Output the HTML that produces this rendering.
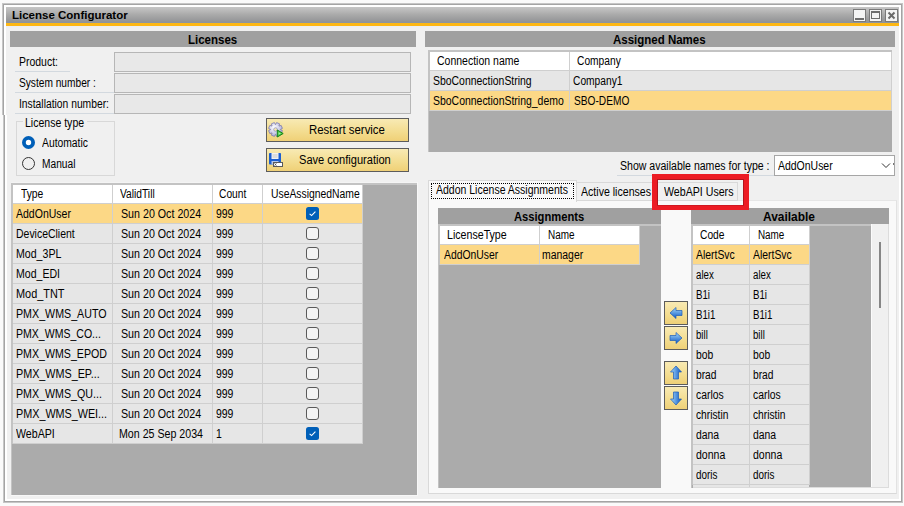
<!DOCTYPE html>
<html><head><meta charset="utf-8"><style>
html,body{margin:0;padding:0;}
body{width:904px;height:506px;overflow:hidden;position:relative;background:#fafafa;}
.a{position:absolute;}
.t,.tb{position:absolute;white-space:nowrap;font-family:"Liberation Sans",sans-serif;line-height:14px;transform-origin:0 0;}
.t{font-size:12px;}
.tb{font-size:11.5px;font-weight:bold;}
.tb12{position:absolute;white-space:nowrap;font-family:"Liberation Sans",sans-serif;line-height:14px;transform-origin:0 0;font-size:12px;font-weight:bold;}
</style></head><body>
<div class="a" style="left:2px;top:3px;width:901px;height:500px;background:#ffffff;border:1px solid #c6c6c6;box-sizing:border-box;"></div>
<div class="a" style="left:3px;top:4px;width:899px;height:498px;border:1px solid #a4a4a4;box-sizing:border-box;"></div>
<div class="a" style="left:2px;top:115px;width:5px;height:388px;background:#fafafa;"></div>
<div class="a" style="left:3px;top:115px;width:1px;height:388px;background:#c6c6c6;"></div>
<div class="a" style="left:4px;top:115px;width:1px;height:387px;background:#a4a4a4;"></div>
<div class="a" style="left:5px;top:115px;width:2px;height:386px;background:#ffffff;"></div>
<div class="a" style="left:4px;top:501px;width:3px;height:1px;background:#a4a4a4;"></div>
<div class="a" style="left:3px;top:502px;width:4px;height:1px;background:#c6c6c6;"></div>
<div class="a" style="left:6px;top:26px;width:893px;height:473px;background:#f0f0f0;"></div>
<div class="a" style="left:6px;top:115px;width:1px;height:384px;background:#ffffff;"></div>
<div class="a" style="left:6px;top:26px;width:893px;height:1px;background:#eceef4;"></div>
<div class="a" style="left:6px;top:7px;width:893px;height:16px;background:linear-gradient(#c6c6c6,#a9a9a9 50%,#8e9093);"></div>
<div class="a" style="left:6px;top:22px;width:893px;height:1px;background:#8c94a0;"></div>
<div class="a" style="left:6px;top:23px;width:893px;height:3px;background:#fdb714;"></div>
<div class="tb" style="left:12.00px;top:8px;color:#000;">License Configurator</div>
<div class="a" style="left:853px;top:9px;width:13px;height:13px;background:#f4f4f4;border:1px solid #7a7a7a;box-sizing:border-box;"></div>
<div class="a" style="left:869px;top:9px;width:13px;height:13px;background:#f4f4f4;border:1px solid #7a7a7a;box-sizing:border-box;"></div>
<div class="a" style="left:885px;top:9px;width:13px;height:13px;background:#f4f4f4;border:1px solid #7a7a7a;box-sizing:border-box;"></div>
<div class="a" style="left:855px;top:18px;width:9px;height:2px;background:#6e6e6e;"></div>
<div class="a" style="left:871px;top:11px;width:9px;height:8px;border:1px solid #6e6e6e;box-sizing:border-box;border-top-width:2px;"></div>
<svg class="a" style="left:885px;top:9px" width="13" height="13"><path d="M3.5 3.5L9.5 9.5M9.5 3.5L3.5 9.5" stroke="#6a6a6a" stroke-width="2"/></svg>
<div class="a" style="left:10px;top:31px;width:406px;height:16px;background:#a0a0a0;"></div>
<div class="tb12" style="left:187.70px;top:33px;color:#000;transform:scaleX(0.957);">Licenses</div>
<div class="t" style="left:18.60px;top:55px;color:#000;transform:scaleX(0.872);">Product:</div>
<div class="a" style="left:15px;top:71px;width:55px;height:1px;background:#d3d9df;"></div>
<div class="a" style="left:114px;top:52px;width:297px;height:20px;background:#e8e8e8;border:1px solid #b6b6b6;box-sizing:border-box;"></div>
<div class="t" style="left:18.60px;top:76px;color:#000;transform:scaleX(0.847);">System number :</div>
<div class="a" style="left:15px;top:92px;width:99px;height:1px;background:#d3d9df;"></div>
<div class="a" style="left:114px;top:73px;width:297px;height:20px;background:#e8e8e8;border:1px solid #b6b6b6;box-sizing:border-box;"></div>
<div class="t" style="left:18.60px;top:97px;color:#000;transform:scaleX(0.859);">Installation number:</div>
<div class="a" style="left:15px;top:113px;width:99px;height:1px;background:#d3d9df;"></div>
<div class="a" style="left:114px;top:94px;width:297px;height:20px;background:#e8e8e8;border:1px solid #b6b6b6;box-sizing:border-box;"></div>
<div class="a" style="left:16px;top:121px;width:99px;height:55px;border:1px solid #d8d8d8;box-sizing:border-box;"></div>
<div class="a" style="left:23px;top:116px;width:64px;height:8px;background:#f0f0f0;"></div>
<div class="t" style="left:25.20px;top:116px;color:#000;transform:scaleX(0.877);">License type</div>
<svg class="a" style="left:22px;top:136px" width="14" height="14"><circle cx="6.5" cy="6.5" r="4.6" fill="#fff" stroke="#005fb8" stroke-width="3.8"/></svg>
<div class="t" style="left:41.50px;top:136px;color:#000;transform:scaleX(0.861);">Automatic</div>
<svg class="a" style="left:22px;top:157px" width="14" height="14"><circle cx="6.5" cy="6.5" r="6" fill="#f0f0f0" stroke="#333" stroke-width="1"/></svg>
<div class="t" style="left:41.50px;top:157px;color:#000;transform:scaleX(0.850);">Manual</div>
<div class="a" style="left:266px;top:118px;width:143px;height:24px;background:linear-gradient(#f8eab4,#f3dc8e 60%,#efd077);border:1px solid #5c5c5c;box-sizing:border-box;"></div>
<div class="a" style="left:266px;top:148px;width:143px;height:24px;background:linear-gradient(#f8eab4,#f3dc8e 60%,#efd077);border:1px solid #5c5c5c;box-sizing:border-box;"></div>
<div class="t" style="left:308.50px;top:123px;color:#000;transform:scaleX(0.948);">Restart service</div>
<div class="t" style="left:299.30px;top:153px;color:#000;transform:scaleX(0.923);">Save configuration</div>
<svg class="a" style="left:268px;top:122px" width="17" height="17" viewBox="0 0 17 17">
<defs><radialGradient id="gg" cx="0.4" cy="0.35" r="0.7"><stop offset="0" stop-color="#ffffff"/><stop offset="1" stop-color="#a9a9d6"/></radialGradient></defs>
<path d="M12.40,7.58 L14.41,8.60 L13.16,11.61 L11.02,10.91 L10.91,11.02 L11.61,13.16 L8.60,14.41 L7.58,12.40 L7.42,12.40 L6.40,14.41 L3.39,13.16 L4.09,11.02 L3.98,10.91 L1.84,11.61 L0.59,8.60 L2.60,7.58 L2.60,7.42 L0.59,6.40 L1.84,3.39 L3.98,4.09 L4.09,3.98 L3.39,1.84 L6.40,0.59 L7.42,2.60 L7.58,2.60 L8.60,0.59 L11.61,1.84 L10.91,3.98 L11.02,4.09 L13.16,3.39 L14.41,6.40 L12.40,7.42 Z" fill="url(#gg)" stroke="#6e6eaa" stroke-width="0.7"/>
<circle cx="7.5" cy="7.5" r="1.8" fill="#f4e8b0" stroke="#8080b8" stroke-width="0.6"/>
<path d="M9.3,8 L15.2,11.5 L9.3,15 Z" fill="#46c846" stroke="#178217" stroke-width="1"/><path d="M10.6,10.3 L13,11.5 L10.6,12.8 Z" fill="#a8eca8"/></svg>
<svg class="a" style="left:268px;top:152px" width="16" height="16" viewBox="0 0 16 16">
<rect x="1" y="1" width="12" height="11.5" rx="0.8" fill="#1c5fd0"/>
<rect x="3.5" y="1" width="7" height="6" fill="#f2f2f2"/>
<rect x="4.5" y="2.5" width="5" height="1" fill="#c8c8c8"/><rect x="4.5" y="4.5" width="5" height="1" fill="#c8c8c8"/>
<rect x="3.5" y="9" width="7" height="3.5" fill="#b8c8e8"/>
<rect x="5" y="10" width="10" height="5" fill="#5a5a5a"/>
<rect x="6" y="11" width="8" height="3" fill="#ffffff"/>
<path d="M6.5,11.3 L8.5,13.7 M8.5,11.3 L6.5,13.7" stroke="#444" stroke-width="0.7"/></svg>
<div class="a" style="left:11px;top:183px;width:406px;height:312px;background:#ababab;"></div>
<div class="a" style="left:11px;top:183px;width:406px;height:2px;background:#c3c3c3;"></div>
<div class="a" style="left:11px;top:183px;width:1px;height:312px;background:#c3c3c3;"></div>
<div class="a" style="left:12px;top:183px;width:1px;height:261px;background:#c3c3c3;"></div>
<div class="a" style="left:13px;top:185px;width:349px;height:18px;background:#ffffff;"></div>
<div class="a" style="left:13px;top:203px;width:349px;height:1px;background:#cfcfcf;"></div>
<div class="a" style="left:13px;top:204px;width:349px;height:19px;background:#fcd886;"></div>
<div class="a" style="left:13px;top:223px;width:349px;height:1px;background:#cfcfcf;"></div>
<div class="a" style="left:13px;top:224px;width:349px;height:19px;background:#e6e6e6;"></div>
<div class="a" style="left:13px;top:243px;width:349px;height:1px;background:#cfcfcf;"></div>
<div class="a" style="left:13px;top:244px;width:349px;height:19px;background:#e6e6e6;"></div>
<div class="a" style="left:13px;top:263px;width:349px;height:1px;background:#cfcfcf;"></div>
<div class="a" style="left:13px;top:264px;width:349px;height:19px;background:#e6e6e6;"></div>
<div class="a" style="left:13px;top:283px;width:349px;height:1px;background:#cfcfcf;"></div>
<div class="a" style="left:13px;top:284px;width:349px;height:19px;background:#e6e6e6;"></div>
<div class="a" style="left:13px;top:303px;width:349px;height:1px;background:#cfcfcf;"></div>
<div class="a" style="left:13px;top:304px;width:349px;height:19px;background:#e6e6e6;"></div>
<div class="a" style="left:13px;top:323px;width:349px;height:1px;background:#cfcfcf;"></div>
<div class="a" style="left:13px;top:324px;width:349px;height:19px;background:#e6e6e6;"></div>
<div class="a" style="left:13px;top:343px;width:349px;height:1px;background:#cfcfcf;"></div>
<div class="a" style="left:13px;top:344px;width:349px;height:19px;background:#e6e6e6;"></div>
<div class="a" style="left:13px;top:363px;width:349px;height:1px;background:#cfcfcf;"></div>
<div class="a" style="left:13px;top:364px;width:349px;height:19px;background:#e6e6e6;"></div>
<div class="a" style="left:13px;top:383px;width:349px;height:1px;background:#cfcfcf;"></div>
<div class="a" style="left:13px;top:384px;width:349px;height:19px;background:#e6e6e6;"></div>
<div class="a" style="left:13px;top:403px;width:349px;height:1px;background:#cfcfcf;"></div>
<div class="a" style="left:13px;top:404px;width:349px;height:19px;background:#e6e6e6;"></div>
<div class="a" style="left:13px;top:423px;width:349px;height:1px;background:#cfcfcf;"></div>
<div class="a" style="left:13px;top:424px;width:349px;height:19px;background:#e6e6e6;"></div>
<div class="a" style="left:13px;top:443px;width:349px;height:1px;background:#cfcfcf;"></div>
<div class="a" style="left:112px;top:185px;width:1px;height:259px;background:#cfcfcf;"></div>
<div class="a" style="left:212px;top:185px;width:1px;height:259px;background:#cfcfcf;"></div>
<div class="a" style="left:262px;top:185px;width:1px;height:259px;background:#cfcfcf;"></div>
<div class="a" style="left:362px;top:185px;width:1px;height:259px;background:#cfcfcf;"></div>
<div class="a" style="left:417px;top:182px;width:1px;height:314px;background:#f7f7f7;"></div>
<div class="a" style="left:11px;top:495px;width:407px;height:1px;background:#f7f7f7;"></div>
<div class="a" style="left:11px;top:182px;width:406px;height:1px;background:#f4f4f4;"></div>
<div class="t" style="left:20.90px;top:187px;color:#000;transform:scaleX(0.858);">Type</div>
<div class="t" style="left:120.30px;top:187px;color:#000;transform:scaleX(0.853);">ValidTill</div>
<div class="t" style="left:219.40px;top:187px;color:#000;transform:scaleX(0.853);">Count</div>
<div class="t" style="left:270.50px;top:187px;color:#000;transform:scaleX(0.864);">UseAssignedName</div>
<div class="t" style="left:16.20px;top:207px;color:#000;transform:scaleX(0.876);">AddOnUser</div>
<div class="t" style="left:121.40px;top:207px;color:#000;transform:scaleX(0.890);">Sun 20 Oct 2024</div>
<div class="t" style="left:216.30px;top:207px;color:#000;transform:scaleX(0.870);">999</div>
<svg class="a" style="left:306px;top:207px" width="13" height="13"><rect x="0" y="0" width="13" height="13" rx="2.5" fill="#005fb8"/><path d="M3.6 6.8L5.6 8.6L9.4 4.6" stroke="#fff" stroke-width="1.1" fill="none"/></svg>
<div class="t" style="left:16.20px;top:227px;color:#000;transform:scaleX(0.872);">DeviceClient</div>
<div class="t" style="left:121.40px;top:227px;color:#000;transform:scaleX(0.890);">Sun 20 Oct 2024</div>
<div class="t" style="left:216.30px;top:227px;color:#000;transform:scaleX(0.870);">999</div>
<svg class="a" style="left:306px;top:227px" width="13" height="13"><rect x="0.5" y="0.5" width="12" height="12" rx="2.5" fill="#f4f4f4" stroke="#5a5a5a" stroke-width="1"/></svg>
<div class="t" style="left:16.20px;top:247px;color:#000;transform:scaleX(0.883);">Mod_3PL</div>
<div class="t" style="left:121.40px;top:247px;color:#000;transform:scaleX(0.890);">Sun 20 Oct 2024</div>
<div class="t" style="left:216.30px;top:247px;color:#000;transform:scaleX(0.870);">999</div>
<svg class="a" style="left:306px;top:247px" width="13" height="13"><rect x="0.5" y="0.5" width="12" height="12" rx="2.5" fill="#f4f4f4" stroke="#5a5a5a" stroke-width="1"/></svg>
<div class="t" style="left:16.20px;top:267px;color:#000;transform:scaleX(0.880);">Mod_EDI</div>
<div class="t" style="left:121.40px;top:267px;color:#000;transform:scaleX(0.890);">Sun 20 Oct 2024</div>
<div class="t" style="left:216.30px;top:267px;color:#000;transform:scaleX(0.870);">999</div>
<svg class="a" style="left:306px;top:267px" width="13" height="13"><rect x="0.5" y="0.5" width="12" height="12" rx="2.5" fill="#f4f4f4" stroke="#5a5a5a" stroke-width="1"/></svg>
<div class="t" style="left:16.20px;top:287px;color:#000;transform:scaleX(0.908);">Mod_TNT</div>
<div class="t" style="left:121.40px;top:287px;color:#000;transform:scaleX(0.890);">Sun 20 Oct 2024</div>
<div class="t" style="left:216.30px;top:287px;color:#000;transform:scaleX(0.870);">999</div>
<svg class="a" style="left:306px;top:287px" width="13" height="13"><rect x="0.5" y="0.5" width="12" height="12" rx="2.5" fill="#f4f4f4" stroke="#5a5a5a" stroke-width="1"/></svg>
<div class="t" style="left:16.20px;top:307px;color:#000;transform:scaleX(0.890);">PMX_WMS_AUTO</div>
<div class="t" style="left:121.40px;top:307px;color:#000;transform:scaleX(0.890);">Sun 20 Oct 2024</div>
<div class="t" style="left:216.30px;top:307px;color:#000;transform:scaleX(0.870);">999</div>
<svg class="a" style="left:306px;top:307px" width="13" height="13"><rect x="0.5" y="0.5" width="12" height="12" rx="2.5" fill="#f4f4f4" stroke="#5a5a5a" stroke-width="1"/></svg>
<div class="t" style="left:16.20px;top:327px;color:#000;transform:scaleX(0.878);">PMX_WMS_CO...</div>
<div class="t" style="left:121.40px;top:327px;color:#000;transform:scaleX(0.890);">Sun 20 Oct 2024</div>
<div class="t" style="left:216.30px;top:327px;color:#000;transform:scaleX(0.870);">999</div>
<svg class="a" style="left:306px;top:327px" width="13" height="13"><rect x="0.5" y="0.5" width="12" height="12" rx="2.5" fill="#f4f4f4" stroke="#5a5a5a" stroke-width="1"/></svg>
<div class="t" style="left:16.20px;top:347px;color:#000;transform:scaleX(0.886);">PMX_WMS_EPOD</div>
<div class="t" style="left:121.40px;top:347px;color:#000;transform:scaleX(0.890);">Sun 20 Oct 2024</div>
<div class="t" style="left:216.30px;top:347px;color:#000;transform:scaleX(0.870);">999</div>
<svg class="a" style="left:306px;top:347px" width="13" height="13"><rect x="0.5" y="0.5" width="12" height="12" rx="2.5" fill="#f4f4f4" stroke="#5a5a5a" stroke-width="1"/></svg>
<div class="t" style="left:16.20px;top:367px;color:#000;transform:scaleX(0.898);">PMX_WMS_EP...</div>
<div class="t" style="left:121.40px;top:367px;color:#000;transform:scaleX(0.890);">Sun 20 Oct 2024</div>
<div class="t" style="left:216.30px;top:367px;color:#000;transform:scaleX(0.870);">999</div>
<svg class="a" style="left:306px;top:367px" width="13" height="13"><rect x="0.5" y="0.5" width="12" height="12" rx="2.5" fill="#f4f4f4" stroke="#5a5a5a" stroke-width="1"/></svg>
<div class="t" style="left:16.20px;top:387px;color:#000;transform:scaleX(0.889);">PMX_WMS_QU...</div>
<div class="t" style="left:121.40px;top:387px;color:#000;transform:scaleX(0.890);">Sun 20 Oct 2024</div>
<div class="t" style="left:216.30px;top:387px;color:#000;transform:scaleX(0.870);">999</div>
<svg class="a" style="left:306px;top:387px" width="13" height="13"><rect x="0.5" y="0.5" width="12" height="12" rx="2.5" fill="#f4f4f4" stroke="#5a5a5a" stroke-width="1"/></svg>
<div class="t" style="left:16.20px;top:407px;color:#000;transform:scaleX(0.899);">PMX_WMS_WEI...</div>
<div class="t" style="left:121.40px;top:407px;color:#000;transform:scaleX(0.890);">Sun 20 Oct 2024</div>
<div class="t" style="left:216.30px;top:407px;color:#000;transform:scaleX(0.870);">999</div>
<svg class="a" style="left:306px;top:407px" width="13" height="13"><rect x="0.5" y="0.5" width="12" height="12" rx="2.5" fill="#f4f4f4" stroke="#5a5a5a" stroke-width="1"/></svg>
<div class="t" style="left:16.20px;top:427px;color:#000;transform:scaleX(0.886);">WebAPI</div>
<div class="t" style="left:119.30px;top:427px;color:#000;transform:scaleX(0.887);">Mon 25 Sep 2034</div>
<div class="t" style="left:216.30px;top:427px;color:#000;transform:scaleX(0.870);">1</div>
<svg class="a" style="left:306px;top:427px" width="13" height="13"><rect x="0" y="0" width="13" height="13" rx="2.5" fill="#005fb8"/><path d="M3.6 6.8L5.6 8.6L9.4 4.6" stroke="#fff" stroke-width="1.1" fill="none"/></svg>
<div class="a" style="left:425px;top:31px;width:470px;height:16px;background:#a0a0a0;"></div>
<div class="tb12" style="left:613.30px;top:33px;color:#000;transform:scaleX(0.957);">Assigned Names</div>
<div class="a" style="left:428px;top:50px;width:464px;height:102px;background:#ababab;"></div>
<div class="a" style="left:428px;top:50px;width:464px;height:2px;background:#c3c3c3;"></div>
<div class="a" style="left:428px;top:50px;width:1px;height:102px;background:#c3c3c3;"></div>
<div class="a" style="left:429px;top:50px;width:1px;height:61px;background:#c3c3c3;"></div>
<div class="a" style="left:430px;top:52px;width:461px;height:18px;background:#ffffff;"></div>
<div class="a" style="left:430px;top:70px;width:461px;height:1px;background:#cfcfcf;"></div>
<div class="a" style="left:430px;top:71px;width:461px;height:19px;background:#e6e6e6;"></div>
<div class="a" style="left:430px;top:90px;width:461px;height:1px;background:#cfcfcf;"></div>
<div class="a" style="left:430px;top:91px;width:461px;height:19px;background:#fcd886;"></div>
<div class="a" style="left:430px;top:110px;width:461px;height:1px;background:#cfcfcf;"></div>
<div class="a" style="left:569px;top:52px;width:1px;height:59px;background:#cfcfcf;"></div>
<div class="a" style="left:891px;top:52px;width:1px;height:59px;background:#cfcfcf;"></div>
<div class="t" style="left:436.70px;top:54px;color:#000;transform:scaleX(0.875);">Connection name</div>
<div class="t" style="left:576.50px;top:54px;color:#000;transform:scaleX(0.852);">Company</div>
<div class="t" style="left:433.20px;top:74px;color:#000;transform:scaleX(0.870);">SboConnectionString</div>
<div class="t" style="left:572.70px;top:74px;color:#000;transform:scaleX(0.853);">Company1</div>
<div class="t" style="left:433.20px;top:94px;color:#000;transform:scaleX(0.871);">SboConnectionString_demo</div>
<div class="t" style="left:573.90px;top:94px;color:#000;transform:scaleX(0.847);">SBO-DEMO</div>
<div class="t" style="left:620.00px;top:159px;color:#000;transform:scaleX(0.879);">Show available names for type :</div>
<div class="a" style="left:617px;top:175px;width:157px;height:1px;background:#d3d9df;"></div>
<div class="a" style="left:774px;top:155px;width:121px;height:21px;background:#ffffff;border:1px solid #a6a6a6;box-sizing:border-box;"></div>
<div class="t" style="left:777.80px;top:159px;color:#000;transform:scaleX(0.872);">AddOnUser</div>
<svg class="a" style="left:881px;top:162px" width="11" height="8"><path d="M1 1.5L5 5.5L9 1.5" stroke="#333" stroke-width="1" fill="none"/></svg>
<div class="a" style="left:893px;top:163px;width:1px;height:2px;background:#777;"></div>
<div class="a" style="left:428px;top:200px;width:469px;height:294px;background:#f9f9f9;border:1px solid #d9d9d9;box-sizing:border-box;border-top-color:#e6e6e6;border-right-color:#e2e2e2;"></div>
<div class="a" style="left:576px;top:182px;width:78px;height:19px;background:#f0f0f0;border:1px solid #d9d9d9;box-sizing:border-box;"></div>
<div class="a" style="left:657px;top:182px;width:81px;height:19px;background:#f0f0f0;border:1px solid #d9d9d9;box-sizing:border-box;"></div>
<div class="a" style="left:428px;top:180px;width:149px;height:22px;background:#f9f9f9;border:1px solid #d9d9d9;box-sizing:border-box;border-bottom:none;"></div>
<div class="a" style="left:431px;top:183px;width:143px;height:16px;border:1px dotted #000;box-sizing:border-box;"></div>
<div class="t" style="left:436.00px;top:183px;color:#000;transform:scaleX(0.875);">Addon License Assignments</div>
<div class="t" style="left:581.30px;top:185px;color:#000;transform:scaleX(0.882);">Active licenses</div>
<div class="t" style="left:663.80px;top:185px;color:#000;transform:scaleX(0.885);">WebAPI Users</div>
<div class="a" style="left:438px;top:208px;width:223px;height:16px;background:#a0a0a0;"></div>
<div class="tb12" style="left:514.00px;top:210px;color:#000;transform:scaleX(0.931);">Assignments</div>
<div class="a" style="left:438px;top:224px;width:223px;height:264px;background:#ababab;"></div>
<div class="a" style="left:438px;top:224px;width:223px;height:2px;background:#c3c3c3;"></div>
<div class="a" style="left:438px;top:224px;width:1px;height:264px;background:#c3c3c3;"></div>
<div class="a" style="left:439px;top:224px;width:1px;height:41px;background:#c3c3c3;"></div>
<div class="a" style="left:440px;top:226px;width:199px;height:18px;background:#ffffff;"></div>
<div class="a" style="left:440px;top:244px;width:199px;height:1px;background:#cfcfcf;"></div>
<div class="a" style="left:440px;top:245px;width:199px;height:19px;background:#fcd886;"></div>
<div class="a" style="left:440px;top:264px;width:199px;height:1px;background:#cfcfcf;"></div>
<div class="a" style="left:539px;top:226px;width:1px;height:39px;background:#cfcfcf;"></div>
<div class="a" style="left:639px;top:226px;width:1px;height:39px;background:#cfcfcf;"></div>
<div class="t" style="left:447.30px;top:228px;color:#000;transform:scaleX(0.886);">LicenseType</div>
<div class="t" style="left:547.50px;top:228px;color:#000;transform:scaleX(0.828);">Name</div>
<div class="t" style="left:443.50px;top:248px;color:#000;transform:scaleX(0.864);">AddOnUser</div>
<div class="t" style="left:542.40px;top:248px;color:#000;transform:scaleX(0.869);">manager</div>
<div class="a" style="left:664px;top:301px;width:24px;height:24px;background:linear-gradient(#f8eab4,#f3dc8e 60%,#efd077);border:1px solid #5c5c5c;box-sizing:border-box;"></div>
<svg class="a" style="left:668px;top:307px" width="16" height="12"><defs><linearGradient id="g301" x1="0" y1="0" x2="0" y2="1"><stop offset="0" stop-color="#a8dcfc"/><stop offset="1" stop-color="#0c56c4"/></linearGradient></defs><path d="M2,6 L8,0.5 L8,3.5 L14,3.5 L14,8.5 L8,8.5 L8,11.5 Z" fill="url(#g301)" stroke="#1c5cb8" stroke-width="0.7"/></svg>
<div class="a" style="left:664px;top:326px;width:24px;height:24px;background:linear-gradient(#f8eab4,#f3dc8e 60%,#efd077);border:1px solid #5c5c5c;box-sizing:border-box;"></div>
<svg class="a" style="left:668px;top:332px" width="16" height="12"><defs><linearGradient id="g326" x1="0" y1="0" x2="0" y2="1"><stop offset="0" stop-color="#a8dcfc"/><stop offset="1" stop-color="#0c56c4"/></linearGradient></defs><path d="M14,6 L8,0.5 L8,3.5 L2,3.5 L2,8.5 L8,8.5 L8,11.5 Z" fill="url(#g326)" stroke="#1c5cb8" stroke-width="0.7"/></svg>
<div class="a" style="left:664px;top:361px;width:24px;height:24px;background:linear-gradient(#f8eab4,#f3dc8e 60%,#efd077);border:1px solid #5c5c5c;box-sizing:border-box;"></div>
<svg class="a" style="left:670px;top:365px" width="12" height="16"><defs><linearGradient id="g361" x1="0" y1="0" x2="1" y2="0"><stop offset="0" stop-color="#a8dcfc"/><stop offset="1" stop-color="#0c56c4"/></linearGradient></defs><path d="M6,1 L11.5,7 L8.5,7 L8.5,14 L3.5,14 L3.5,7 L0.5,7 Z" fill="url(#g361)" stroke="#1c5cb8" stroke-width="0.7"/></svg>
<div class="a" style="left:664px;top:386px;width:24px;height:24px;background:linear-gradient(#f8eab4,#f3dc8e 60%,#efd077);border:1px solid #5c5c5c;box-sizing:border-box;"></div>
<svg class="a" style="left:670px;top:390px" width="12" height="16"><defs><linearGradient id="g386" x1="0" y1="0" x2="1" y2="0"><stop offset="0" stop-color="#a8dcfc"/><stop offset="1" stop-color="#0c56c4"/></linearGradient></defs><path d="M6,15 L11.5,9 L8.5,9 L8.5,2 L3.5,2 L3.5,9 L0.5,9 Z" fill="url(#g386)" stroke="#1c5cb8" stroke-width="0.7"/></svg>
<div class="a" style="left:691px;top:208px;width:198px;height:16px;background:#a0a0a0;"></div>
<div class="tb12" style="left:763.10px;top:210px;color:#000;transform:scaleX(0.994);">Available</div>
<div class="a" style="left:691px;top:224px;width:198px;height:264px;background:#ababab;"></div>
<div class="a" style="left:691px;top:224px;width:198px;height:2px;background:#c3c3c3;"></div>
<div class="a" style="left:691px;top:224px;width:1px;height:264px;background:#c3c3c3;"></div>
<div class="a" style="left:692px;top:224px;width:1px;height:261px;background:#c3c3c3;"></div>
<div class="a" style="left:693px;top:226px;width:116px;height:18px;background:#ffffff;"></div>
<div class="a" style="left:693px;top:244px;width:116px;height:1px;background:#cfcfcf;"></div>
<div class="a" style="left:693px;top:245px;width:116px;height:19px;background:#fcd886;"></div>
<div class="a" style="left:693px;top:264px;width:116px;height:1px;background:#cfcfcf;"></div>
<div class="a" style="left:693px;top:265px;width:116px;height:19px;background:#e6e6e6;"></div>
<div class="a" style="left:693px;top:284px;width:116px;height:1px;background:#cfcfcf;"></div>
<div class="a" style="left:693px;top:285px;width:116px;height:19px;background:#e6e6e6;"></div>
<div class="a" style="left:693px;top:304px;width:116px;height:1px;background:#cfcfcf;"></div>
<div class="a" style="left:693px;top:305px;width:116px;height:19px;background:#e6e6e6;"></div>
<div class="a" style="left:693px;top:324px;width:116px;height:1px;background:#cfcfcf;"></div>
<div class="a" style="left:693px;top:325px;width:116px;height:19px;background:#e6e6e6;"></div>
<div class="a" style="left:693px;top:344px;width:116px;height:1px;background:#cfcfcf;"></div>
<div class="a" style="left:693px;top:345px;width:116px;height:19px;background:#e6e6e6;"></div>
<div class="a" style="left:693px;top:364px;width:116px;height:1px;background:#cfcfcf;"></div>
<div class="a" style="left:693px;top:365px;width:116px;height:19px;background:#e6e6e6;"></div>
<div class="a" style="left:693px;top:384px;width:116px;height:1px;background:#cfcfcf;"></div>
<div class="a" style="left:693px;top:385px;width:116px;height:19px;background:#e6e6e6;"></div>
<div class="a" style="left:693px;top:404px;width:116px;height:1px;background:#cfcfcf;"></div>
<div class="a" style="left:693px;top:405px;width:116px;height:19px;background:#e6e6e6;"></div>
<div class="a" style="left:693px;top:424px;width:116px;height:1px;background:#cfcfcf;"></div>
<div class="a" style="left:693px;top:425px;width:116px;height:19px;background:#e6e6e6;"></div>
<div class="a" style="left:693px;top:444px;width:116px;height:1px;background:#cfcfcf;"></div>
<div class="a" style="left:693px;top:445px;width:116px;height:19px;background:#e6e6e6;"></div>
<div class="a" style="left:693px;top:464px;width:116px;height:1px;background:#cfcfcf;"></div>
<div class="a" style="left:693px;top:465px;width:116px;height:19px;background:#e6e6e6;"></div>
<div class="a" style="left:693px;top:484px;width:116px;height:1px;background:#cfcfcf;"></div>
<div class="a" style="left:749px;top:226px;width:1px;height:259px;background:#cfcfcf;"></div>
<div class="a" style="left:809px;top:226px;width:1px;height:259px;background:#cfcfcf;"></div>
<div class="a" style="left:693px;top:485px;width:116px;height:2px;background:#e6e6e6;"></div>
<div class="a" style="left:749px;top:485px;width:1px;height:2px;background:#cfcfcf;"></div>
<div class="a" style="left:693px;top:487px;width:196px;height:1px;background:#dcdcdc;"></div>
<div class="a" style="left:888px;top:224px;width:1px;height:264px;background:#dcdcdc;"></div>
<div class="a" style="left:872px;top:224px;width:16px;height:263px;background:#f0f0f0;"></div>
<div class="a" style="left:871px;top:224px;width:1px;height:263px;background:#fbfbfb;"></div>
<div class="a" style="left:879px;top:242px;width:2px;height:66px;background:#868686;"></div>
<div class="t" style="left:699.50px;top:228px;color:#000;transform:scaleX(0.854);">Code</div>
<div class="t" style="left:757.60px;top:228px;color:#000;transform:scaleX(0.822);">Name</div>
<div class="t" style="left:696.00px;top:248px;color:#000;transform:scaleX(0.868);">AlertSvc</div>
<div class="t" style="left:753.20px;top:248px;color:#000;transform:scaleX(0.868);">AlertSvc</div>
<div class="t" style="left:696.00px;top:268px;color:#000;transform:scaleX(0.809);">alex</div>
<div class="t" style="left:753.20px;top:268px;color:#000;transform:scaleX(0.809);">alex</div>
<div class="t" style="left:696.00px;top:288px;color:#000;transform:scaleX(0.809);">B1i</div>
<div class="t" style="left:753.20px;top:288px;color:#000;transform:scaleX(0.809);">B1i</div>
<div class="t" style="left:696.00px;top:308px;color:#000;transform:scaleX(0.808);">B1i1</div>
<div class="t" style="left:753.20px;top:308px;color:#000;transform:scaleX(0.808);">B1i1</div>
<div class="t" style="left:696.00px;top:328px;color:#000;transform:scaleX(0.803);">bill</div>
<div class="t" style="left:753.20px;top:328px;color:#000;transform:scaleX(0.803);">bill</div>
<div class="t" style="left:696.00px;top:348px;color:#000;transform:scaleX(0.860);">bob</div>
<div class="t" style="left:753.20px;top:348px;color:#000;transform:scaleX(0.860);">bob</div>
<div class="t" style="left:696.00px;top:368px;color:#000;transform:scaleX(0.854);">brad</div>
<div class="t" style="left:753.20px;top:368px;color:#000;transform:scaleX(0.854);">brad</div>
<div class="t" style="left:696.00px;top:388px;color:#000;transform:scaleX(0.863);">carlos</div>
<div class="t" style="left:753.20px;top:388px;color:#000;transform:scaleX(0.863);">carlos</div>
<div class="t" style="left:696.00px;top:408px;color:#000;transform:scaleX(0.853);">christin</div>
<div class="t" style="left:753.20px;top:408px;color:#000;transform:scaleX(0.853);">christin</div>
<div class="t" style="left:696.00px;top:428px;color:#000;transform:scaleX(0.865);">dana</div>
<div class="t" style="left:753.20px;top:428px;color:#000;transform:scaleX(0.865);">dana</div>
<div class="t" style="left:696.00px;top:448px;color:#000;transform:scaleX(0.877);">donna</div>
<div class="t" style="left:753.20px;top:448px;color:#000;transform:scaleX(0.877);">donna</div>
<div class="t" style="left:696.00px;top:468px;color:#000;transform:scaleX(0.823);">doris</div>
<div class="t" style="left:753.20px;top:468px;color:#000;transform:scaleX(0.823);">doris</div>
<div class="a" style="left:652px;top:174px;width:97px;height:36px;border:5px solid #ec1c24;box-sizing:border-box;border-bottom-width:4px;"></div>
<div class="a" style="left:657px;top:179px;width:87px;height:27px;border:1px solid #b3141c;box-sizing:border-box;border-bottom-color:#d01820;"></div>
</body></html>
